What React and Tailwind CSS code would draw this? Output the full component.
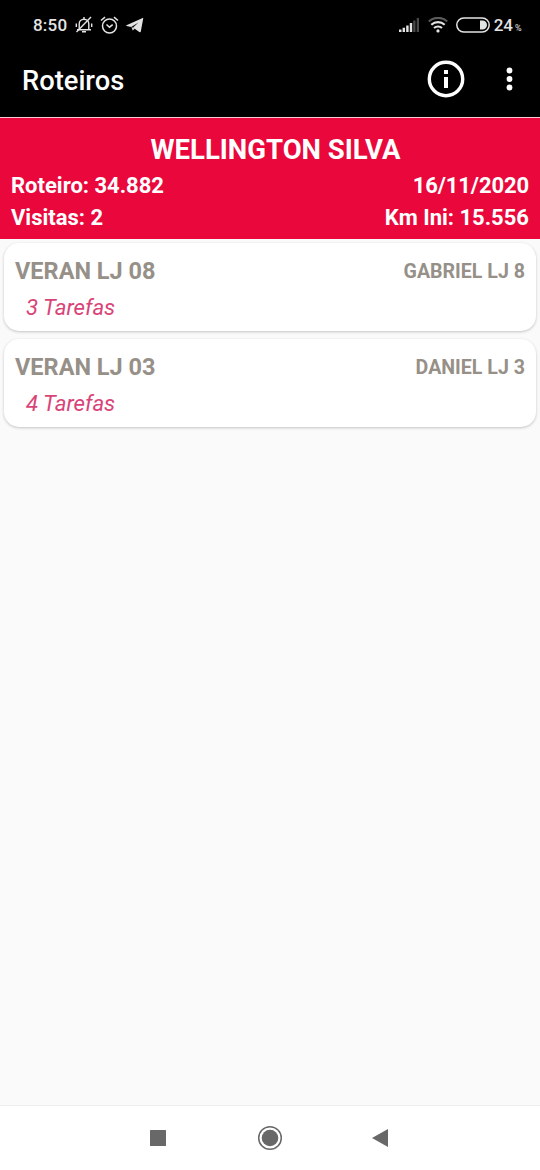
const visits = [
  { store: "VERAN LJ 08", contact: "GABRIEL LJ 8", tasks: "3 Tarefas" },
  { store: "VERAN LJ 03", contact: "DANIEL LJ 3", tasks: "4 Tarefas" },
];

function StatusBar() {
  return (
    <div className="flex h-[50px] items-center justify-between pl-[33px] pr-[19px] text-[#e4e4e4]">
      <div className="flex items-center">
        <span className="w-[42px] text-[17px] leading-5 font-medium tracking-[0.2px]">8:50</span>
        <svg className="h-[18px] w-[18px]" viewBox="0 0 18 18" fill="none" stroke="currentColor" strokeWidth="1.4">
          <path d="M4.200 13.500V8a4.800 4.800 0 0 1 9.600 0v5.500M2 13.700h14M7 15.700h4M9 3V1M1.300 7.500V11M16.700 7.500V11" />
          <path d="M16 1 1.500 16" />
        </svg>
        <svg className="ml-[7px] h-[19px] w-[19px]" viewBox="0 0 19 19" fill="none" stroke="currentColor" strokeWidth="1.5">
          <circle cx="9.500" cy="10" r="7" />
          <path d="m1 4.500 4-3.300M18 4.500l-4-3.300M6.500 8.500l3 2.700 3.200-2.500" />
        </svg>
        <svg className="ml-[7px] h-4 w-[18px]" viewBox="0 0 18 16" fill="currentColor">
          <path d="M16.700.9.500 8.300c-.5.300-.4.600.1.800l4.600 1L12.500 5.600 7 10.600l6.300 4.400c.8.500 1.300.2 1.500-.6L17.200 1.500c.1-.6-.1-.7-.5-.6ZM5.500 10.100l1.200 3.300 2-1.600Z" />
        </svg>
      </div>
      <div className="flex items-center">
        <svg className="h-4 w-[21px]" viewBox="0 0 21 16" fill="currentColor">
          <path d="M0 12.500h2.500V15H0zM3.600 10.800H6V15H3.600zM7.200 8.500h2.400V15H7.200zM10.800 6h2.400v9h-2.400z" />
          <path d="M14.200 3.500h2.300V15h-2.300zM17.700 1H20v14h-2.300z" opacity=".32" />
        </svg>
        <svg className="ml-2 h-4 w-5" viewBox="0 0 20 16" fill="none" stroke="currentColor" strokeWidth="2.200">
          <path d="M.8 4.500a13.500 13.500 0 0 1 18.400 0" opacity=".4" />
          <path d="M3.300 7.800a10 10 0 0 1 13.400 0M6 11a6.200 6.200 0 0 1 8 0" />
          <circle cx="10" cy="13.900" r="1.600" fill="currentColor" stroke="none" />
        </svg>
        <svg className="ml-2 h-4 w-[34px]" viewBox="0 0 34 16">
          <rect x=".8" y="1" width="32.400" height="14" rx="7" fill="none" stroke="currentColor" strokeWidth="1.500" />
          <path d="M24 3.500h2.500a4.500 4.500 0 0 1 0 9H24z" fill="currentColor" />
        </svg>
        <span className="ml-1 text-[17px] leading-5 font-medium">24</span>
        <span className="ml-0.5 mt-[5px] w-[6px] text-[9px] leading-3 tracking-tighter">%</span>
      </div>
    </div>
  );
}

function AppBar() {
  return (
    <div className="flex h-[67px] items-center justify-between pb-[10px] pr-[27px] pl-[22px] text-white">
      <h1 className="pt-[5px] text-[27.300px] leading-8 font-medium">Roteiros</h1>
      <div className="flex items-center">
        <svg className="h-[38px] w-[38px]" viewBox="0 0 38 38">
          <circle cx="19" cy="19" r="16.700" fill="none" stroke="currentColor" strokeWidth="3.400" />
          <path d="M17 10h4v4h-4zM17 17h4v11h-4z" fill="currentColor" />
        </svg>
        <svg className="ml-[40px] h-6 w-[8px]" viewBox="0 0 8 24" fill="currentColor">
          <circle cx="4.500" cy="3.500" r="2.900" />
          <circle cx="4.500" cy="12" r="2.900" />
          <circle cx="4.500" cy="20.500" r="2.900" />
        </svg>
      </div>
    </div>
  );
}

function RouteSummary() {
  return (
    <section className="h-[122px] border-t border-[#f5cbd3] bg-[#e9073c] pr-[11px] pl-[11px] pt-[14px] font-bold text-white">
      <h2 className="ml-[11px] text-center text-[27.500px] leading-9 whitespace-nowrap">WELLINGTON SILVA</h2>
      <div className="flex justify-between text-[22px] leading-9">
        <span>Roteiro: 34.882</span>
        <span className="tracking-[-0.1px]">16/11/2020</span>
      </div>
      <div className="flex justify-between text-[22px] leading-7">
        <span>Visitas: 2</span>
        <span>Km Ini: 15.556</span>
      </div>
    </section>
  );
}

function VisitCard({ visit }) {
  return (
    <article className="h-[88px] rounded-[15px] bg-white pt-3 pr-[11px] pl-[11px] shadow-[0_1px_3px_rgba(0,0,0,0.22)]">
      <div className="flex h-8 items-center justify-between font-bold text-[#969088]">
        <span className="text-[23.500px] leading-8">{visit.store}</span>
        <span className="pt-0.5 text-[19.600px] leading-8">{visit.contact}</span>
      </div>
      <p className="pt-1 pl-[11px] text-[22.200px] leading-8 text-[#d94478] italic">{visit.tasks}</p>
    </article>
  );
}

function NavigationBar() {
  return (
    <nav className="flex h-[65px] items-center border-t border-[#eeeeee] bg-white pl-[150px] text-[#686868]">
      <svg className="h-4 w-4" viewBox="0 0 16 16" fill="currentColor">
        <rect width="16" height="16" rx=".5" />
      </svg>
      <svg className="ml-[91px] h-[26px] w-[26px]" viewBox="0 0 26 26">
        <circle cx="13" cy="13" r="11.300" fill="none" stroke="currentColor" strokeWidth="1.500" />
        <circle cx="13" cy="13" r="8.300" fill="currentColor" />
      </svg>
      <svg className="ml-[89px] h-[18px] w-4" viewBox="0 0 16 18" fill="currentColor">
        <path d="M0 9 16 0v18Z" />
      </svg>
    </nav>
  );
}

export default function App() {
  return (
    <div className="flex h-[1170px] w-[540px] flex-col overflow-hidden bg-[#fafafa] font-['Roboto',sans-serif]">
      <header className="bg-black">
        <StatusBar />
        <AppBar />
      </header>
      <RouteSummary />
      <main className="flex flex-1 flex-col gap-2 px-1 pt-1">
        {visits.map((visit) => (
          <VisitCard key={visit.store} visit={visit} />
        ))}
      </main>
      <NavigationBar />
    </div>
  );
}
